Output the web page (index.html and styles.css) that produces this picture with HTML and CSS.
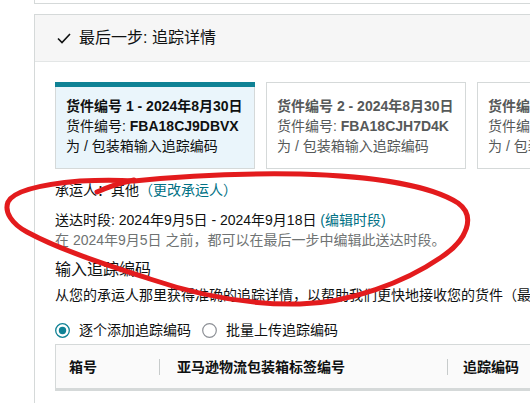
FILE: index.html
```html
<!DOCTYPE html>
<html lang="zh-CN">
<head>
<meta charset="utf-8">
<title>追踪详情</title>
<link rel="stylesheet" href="styles.css">
</head>
<body>
<div class="page">
  <div class="prev-panel"></div>
  <section class="panel">
    <header class="panel-head">
      <svg class="check" width="14" height="11" viewBox="0 0 14 11"><path d="M1 5.5 L5 9.5 L13 1" fill="none" stroke="#0f1111" stroke-width="1.6"/></svg>
      <span>最后一步: 追踪详情</span>
    </header>
    <div class="panel-body">
      <div class="cards">
        <div class="card selected">
          <div class="card-title">货件编号 1 - 2024年8月30日</div>
          <div>货件编号: <b>FBA18CJ9DBVX</b></div>
          <div>为 / 包装箱输入追踪编码</div>
        </div>
        <div class="card">
          <div class="card-title">货件编号 2 - 2024年8月30日</div>
          <div>货件编号: <b>FBA18CJH7D4K</b></div>
          <div>为 / 包装箱输入追踪编码</div>
        </div>
        <div class="card">
          <div class="card-title">货件编号 3 - 2024年8月30日</div>
          <div>货件编号: <b>FBA18CJGXQ2M</b></div>
          <div>为 / 包装箱输入追踪编码</div>
        </div>
      </div>
      <p class="carrier">承运人：其他<a class="link" href="#">（更改承运人）</a></p>
      <p class="window">送达时段: 2024年9月5日 - 2024年9月18日 <a class="link" href="#">(编辑时段)</a></p>
      <p class="hint">在 2024年9月5日 之前，都可以在最后一步中编辑此送达时段。</p>
      <h3 class="sub-title">输入追踪编码</h3>
      <p class="desc">从您的承运人那里获得准确的追踪详情，以帮助我们更快地接收您的货件（最多可能需要几天时间）。</p>
      <div class="radios">
        <label class="radio">
          <svg width="15" height="15" viewBox="0 0 15 15"><circle cx="7.5" cy="7.5" r="6.8" fill="#fff" stroke="#0f8295" stroke-width="1.3"/><circle cx="7.5" cy="7.5" r="3.7" fill="#0f8295"/></svg>
          <span>逐个添加追踪编码</span>
        </label>
        <label class="radio second">
          <svg width="15" height="15" viewBox="0 0 15 15"><circle cx="7.5" cy="7.5" r="6.8" fill="#fff" stroke="#8d9096" stroke-width="1.2"/></svg>
          <span>批量上传追踪编码</span>
        </label>
      </div>
      <div class="table-head">
        <div class="th th-box">箱号</div>
        <span class="sep"></span>
        <div class="th th-label">亚马逊物流包装箱标签编号</div>
        <span class="sep"></span>
        <div class="th th-track">追踪编码</div>
      </div>
    </div>
  </section>
  <svg class="annotation" width="530" height="403" viewBox="0 0 530 403">
    <path d="M97 192 C108 187 120 183 134 180" fill="none" stroke="#e31b1d" stroke-width="5" stroke-linecap="round"/>
    <path d="M134 181 C180 176 240 173 300 174 C370 176 430 185 458 203 C476 216 468 240 440 258 C405 282 350 303 300 304 C250 305 200 296 150 279 C110 266 60 250 27 232 C12 224 4 212 8 202 C14 190 45 184 80 181 C100 180 118 180 134 181" fill="none" stroke="#e31b1d" stroke-width="5" stroke-linecap="round" stroke-linejoin="round"/>
  </svg>
</div>
</body>
</html>
```
FILE: styles.css
```css
html, body {
  margin: 0;
  padding: 0;
  overflow: hidden;
  background: #fff;
}
body {
  font-family: "Liberation Sans", "Noto Sans CJK SC", sans-serif;
  font-size: 14px;
  line-height: 20px;
  color: #0f1111;
}
.page {
  position: relative;
  width: 530px;
  height: 403px;
  overflow: hidden;
  padding-left: 34px;
  box-sizing: border-box;
}
.prev-panel {
  width: 900px;
  height: 3px;
  border: 1px solid #d5d9d9;
  border-top: 0;
}
.panel {
  margin-top: 10px;
  width: 900px;
  height: 600px;
  border: 1px solid #d5d9d9;
}
.panel-head {
  height: 46px;
  background: #f6f6f6;
  border-bottom: 1px solid #e3e6e6;
  display: flex;
  align-items: center;
  gap: 8px;
  padding-left: 22px;
  font-size: 16px;
}
.check { display: block; }
.panel-body {
  padding: 20px 0 0 20px;
}
.cards {
  display: flex;
  gap: 11px;
}
.card {
  position: relative;
  flex: 0 0 200px;
  box-sizing: border-box;
  border: 1px solid #d5d9d9;
  padding: 13px 10px 12px;
  color: #565959;
  white-space: nowrap;
}
.card.selected {
  background: #eaf5fb;
  color: #0f1111;
}
.card.selected::before {
  content: "";
  position: absolute;
  left: -1px;
  right: -1px;
  top: -1px;
  height: 5px;
  background: #0f8295;
}
.card-title { font-weight: bold; }
.card b { font-weight: bold; }
p { margin: 0; }
.link { color: #007185; text-decoration: none; }
.carrier { margin-top: 11px; }
.window { margin-top: 10px; }
.hint { color: #6f7373; }
.sub-title {
  margin: 8px 0 0;
  font-size: 16px;
  font-weight: normal;
  line-height: 24px;
}
.desc {
  margin-top: 3px;
  white-space: nowrap;
}
.radios {
  margin-top: 15px;
  display: flex;
  align-items: center;
  height: 20px;
}
.radio {
  display: flex;
  align-items: center;
  gap: 9px;
}
.radio svg { display: block; }
.radio.second { margin-left: 11px; }
.table-head {
  margin-top: 4px;
  height: 43px;
  display: flex;
  align-items: center;
  background: #fafafa;
  border: 1px solid #d5d9d9;
  border-bottom: 3px solid #d5d9d9;
  font-weight: bold;
  white-space: nowrap;
}
.th-box { width: 90px; padding-left: 13px; }
.th-label { width: 270px; padding-left: 17px; }
.th-track { padding-left: 15px; }
.sep {
  width: 1px;
  height: 16px;
  background: #c7cbcb;
}
.annotation {
  position: absolute;
  left: 0;
  top: 0;
  pointer-events: none;
}
```
